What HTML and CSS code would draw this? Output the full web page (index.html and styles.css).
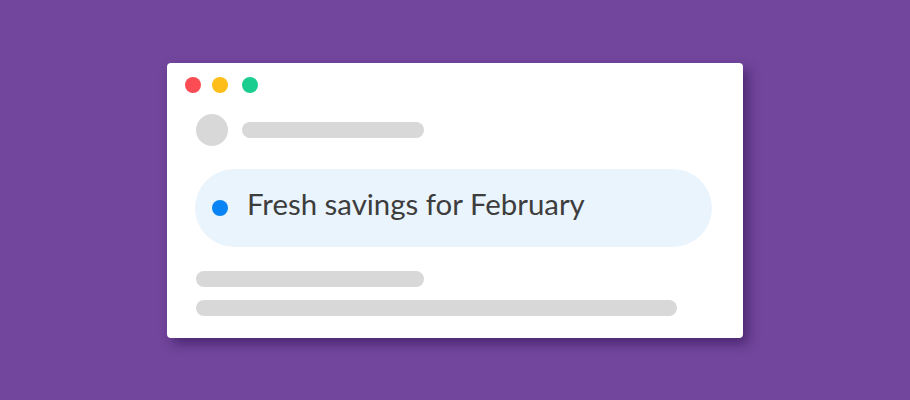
FILE: index.html
```html
<!DOCTYPE html>
<html>
<head>
<meta charset="utf-8">
<link rel="stylesheet" href="styles.css">
</head>
<body>
<div class="card">
  <div class="dots">
    <span class="dot red"></span>
    <span class="dot yellow"></span>
    <span class="dot green"></span>
  </div>
  <div class="user">
    <span class="avatar"></span>
    <span class="bar bar-name"></span>
  </div>
  <div class="pill">
    <span class="pill-dot"></span>
    <span class="pill-text">Fresh savings for February</span>
  </div>
  <div class="lines">
    <span class="bar bar-short"></span>
    <span class="bar bar-long"></span>
  </div>
</div>
</body>
</html>
```
FILE: styles.css
```css
html, body {
  margin: 0;
  padding: 0;
}
body {
  width: 910px;
  height: 400px;
  background: #71469c;
  padding: 63px 0 0 167px;
  box-sizing: border-box;
  overflow: hidden;
}
.card {
  width: 576px;
  height: 275px;
  box-sizing: border-box;
  background: #ffffff;
  border-radius: 4px;
  box-shadow: 5px 6px 12px rgba(45, 15, 80, 0.55);
  padding: 14px 31px 0 18px;
  display: flex;
  flex-direction: column;
}
.dots {
  display: flex;
  height: 16px;
}
.dot {
  width: 16px;
  height: 16px;
  border-radius: 50%;
  display: block;
}
.red { background: #fc4c54; }
.yellow { background: #fdbe1a; margin-left: 11px; }
.green { background: #1ccd90; margin-left: 14px; }
.user {
  display: flex;
  align-items: center;
  margin-top: 21px;
  margin-left: 11px;
}
.avatar {
  width: 32px;
  height: 32px;
  border-radius: 50%;
  background: #d8d8d8;
  display: block;
}
.bar {
  display: block;
  height: 16px;
  border-radius: 8px;
  background: #d8d8d8;
}
.bar-name {
  width: 182px;
  margin-left: 14px;
}
.pill {
  margin-top: 23px;
  margin-left: 10px;
  height: 78px;
  border-radius: 39px;
  background: #eaf4fd;
  display: flex;
  align-items: center;
  padding-left: 17px;
}
.pill-dot {
  width: 16px;
  height: 16px;
  border-radius: 50%;
  background: #0a84f5;
  display: block;
  flex: none;
}
.pill-text {
  margin-left: 19px;
  margin-bottom: 8px;
  font-family: "Lato", sans-serif;
  font-size: 29.4px;
  line-height: 1.2;
  color: #3d3d3d;
  white-space: nowrap;
}
.lines {
  margin-top: 24px;
  margin-left: 11px;
  display: flex;
  flex-direction: column;
  gap: 13px;
}
.bar-short { width: 228px; }
.bar-long { width: 481px; }
```
